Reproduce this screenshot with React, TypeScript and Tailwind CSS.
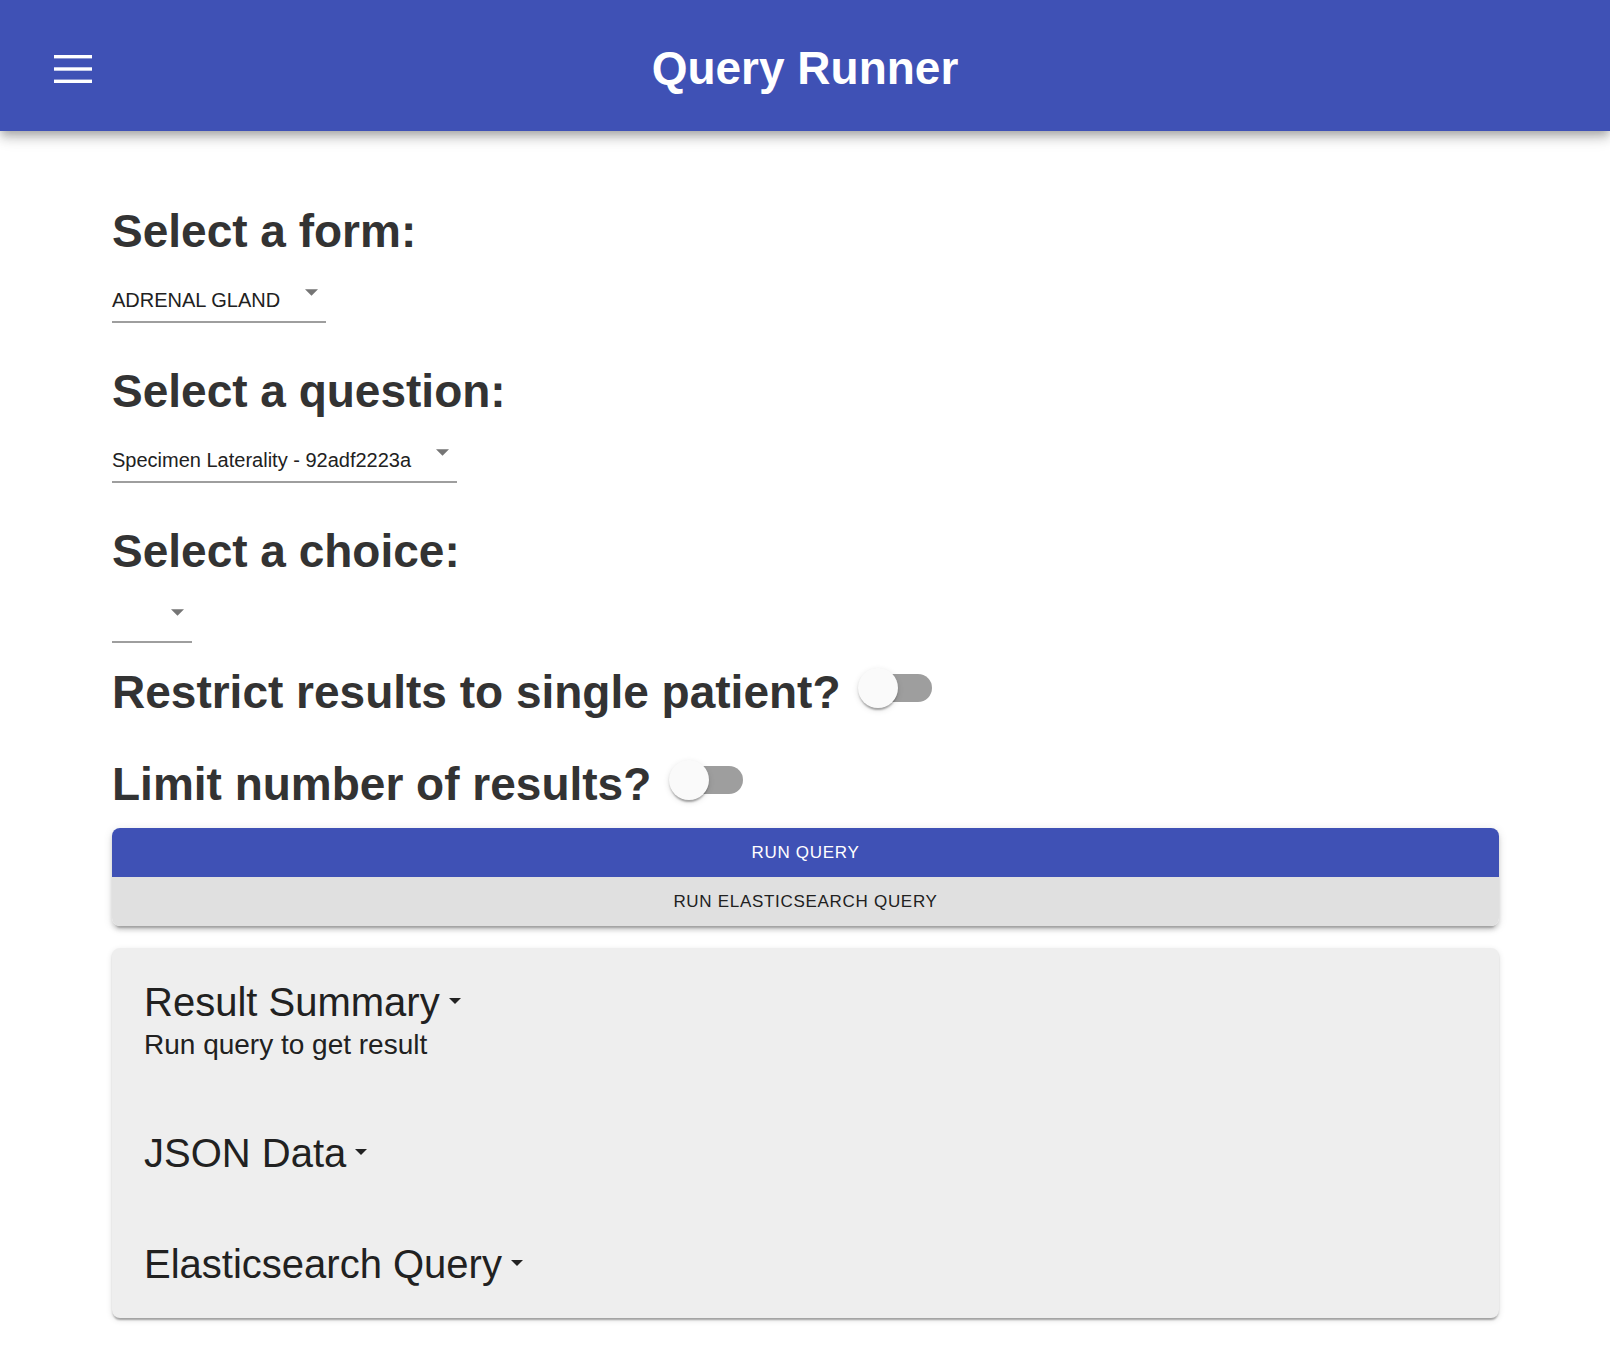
const selects = [
    { label: "Select a form:", value: "ADRENAL GLAND" },
    { label: "Select a question:", value: "Specimen Laterality - 92adf2223a" },
    { label: "Select a choice:", value: "" },
];

function MenuIcon() {
    return (
        <svg width="38" height="28" viewBox="0 0 38 28" className="mt-[1px]">
            <rect x="0" y="0" width="38" height="3.4" fill="#ffffff" />
            <rect x="0" y="12.3" width="38" height="3.4" fill="#ffffff" />
            <rect x="0" y="24.6" width="38" height="3.4" fill="#ffffff" />
        </svg>
    );
}

function Select({ value }: { value: string }) {
    return (
        <div className={`relative flex border-b-2 border-[#9e9e9e] pb-[9px] ${value ? "w-fit pr-[46px]" : "w-[80px]"}`}>
            <span className="h-[24px] whitespace-nowrap text-[20px] leading-[24px] text-[#212121]">{value}</span>
            <svg className="absolute right-[8px] top-[1px]" width="13" height="7" viewBox="0 0 10 5">
                <path d="M0 0l5 5 5-5z" fill="#757575" />
            </svg>
        </div>
    );
}

function Toggle() {
    return (
        <div className="relative h-[76px] w-[116px] shrink-0">
            <div className="absolute left-[24px] top-[24px] h-[28px] w-[68px] rounded-full bg-[#9e9e9e]" />
            <div className="absolute left-[18px] top-[18px] h-[40px] w-[40px] rounded-full bg-[#fafafa] shadow-[0_4px_2px_-2px_rgba(0,0,0,0.2),0_2px_2px_0_rgba(0,0,0,0.14),0_2px_6px_0_rgba(0,0,0,0.12)]" />
        </div>
    );
}

function PanelHeading({ children }: { children: string }) {
    return (
        <div className="flex items-center gap-[9px] text-[40px] leading-[48px]">
            <span>{children}</span>
            <svg className="mb-[3px]" width="12" height="6" viewBox="0 0 10 5">
                <path d="M0 0l5 5 5-5z" fill="#222222" />
            </svg>
        </div>
    );
}

export default function App() {
    return (
        <div className="min-h-screen bg-white font-['Liberation_Sans',Arial,sans-serif]">
            <header className="relative z-10 grid h-[131px] grid-cols-[1fr_auto_1fr] items-center bg-[#3f51b5] pt-[5px] shadow-[0_4px_8px_-2px_rgba(0,0,0,0.2),0_8px_10px_0_rgba(0,0,0,0.14),0_2px_20px_0_rgba(0,0,0,0.12)]">
                <div className="pl-[54px]">
                    <MenuIcon />
                </div>
                <h1 className="text-[46px] font-bold leading-[54px] text-white">Query Runner</h1>
                <div />
            </header>

            <main className="pl-[112px] pr-[111px] pt-[72px] pb-[33px]">
                {selects.map((s, i) => (
                    <div key={s.label} className={i === 0 ? "" : "mt-[40px]"}>
                        <h2 className="mb-[29px] text-[46px] font-bold leading-[56px] text-[#333333]">{s.label}</h2>
                        <Select value={s.value} />
                    </div>
                ))}

                <div className="mt-[7px] flex items-start">
                    <h2 className="mt-[14px] text-[46px] font-bold leading-[56px] text-[#333333]">
                        Restrict results to single patient?
                    </h2>
                    <Toggle />
                </div>

                <div className="mt-[16px] flex items-start">
                    <h2 className="mt-[14px] text-[46px] font-bold leading-[56px] text-[#333333]">
                        Limit number of results?
                    </h2>
                    <Toggle />
                </div>

                <div className="mt-[10px] flex flex-col rounded-[8px] shadow-[0_6px_2px_-4px_rgba(0,0,0,0.2),0_4px_4px_0_rgba(0,0,0,0.14),0_2px_10px_0_rgba(0,0,0,0.12)]">
                    <button className="h-[49px] rounded-t-[8px] bg-[#3f51b5] text-[17px] tracking-[0.7px] text-white">
                        RUN QUERY
                    </button>
                    <button className="h-[49px] rounded-b-[8px] bg-[#e0e0e0] text-[17px] tracking-[0.7px] text-[#212121]">
                        RUN ELASTICSEARCH QUERY
                    </button>
                </div>

                <div className="mt-[22px] rounded-[8px] bg-[#eeeeee] px-[32px] pt-[30px] pb-[30px] text-[#212121] shadow-[0_4px_2px_-2px_rgba(0,0,0,0.2),0_2px_2px_0_rgba(0,0,0,0.14),0_2px_6px_0_rgba(0,0,0,0.12)]">
                    <PanelHeading>Result Summary</PanelHeading>
                    <p className="mt-[2px] text-[28px] leading-[34px]">Run query to get result</p>
                    <div className="mt-[67px]">
                        <PanelHeading>JSON Data</PanelHeading>
                    </div>
                    <div className="mt-[63px]">
                        <PanelHeading>Elasticsearch Query</PanelHeading>
                    </div>
                </div>
            </main>
        </div>
    );
}
